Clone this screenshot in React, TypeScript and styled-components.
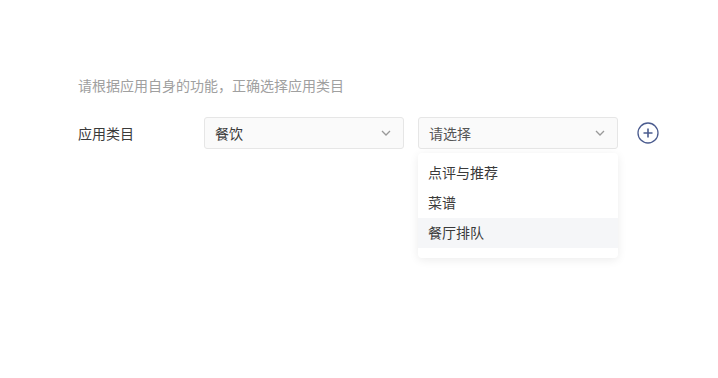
import React from "react";
import styled, { createGlobalStyle } from "styled-components";

const GlobalStyle = createGlobalStyle`
  body {
    margin: 0;
    background: #ffffff;
    font-family: "Noto Sans CJK SC", "Noto Sans", sans-serif;
  }
`;

const Page = styled.div`
  padding: 75px 0 0 78px;
  width: 718px;
  height: 378px;
  box-sizing: border-box;
`;

const Hint = styled.div`
  font-size: 14px;
  line-height: 20px;
  color: #a0a0a0;
  margin-bottom: 22px;
`;

const Row = styled.div`
  display: flex;
  align-items: center;
`;

const Label = styled.div`
  width: 126px;
  font-size: 14px;
  color: #3a3a3a;
`;

const SelectWrap = styled.div`
  position: relative;
  margin-right: 14px;
`;

const SelectBox = styled.div<{ $placeholder?: boolean }>`
  width: 200px;
  height: 32px;
  box-sizing: border-box;
  display: flex;
  align-items: center;
  justify-content: space-between;
  padding: 0 12px 0 10px;
  border: 1px solid #e6e6e6;
  border-radius: 3px;
  background: #fafafa;
  font-size: 14px;
  color: ${(p) => (p.$placeholder ? "#555555" : "#3a3a3a")};
`;

const Menu = styled.div`
  position: absolute;
  top: 36px;
  left: 0;
  width: 200px;
  padding: 5px 0 10px;
  background: #ffffff;
  border-radius: 4px;
  box-shadow: 0 2px 10px rgba(0, 0, 0, 0.08);
`;

const Option = styled.div<{ $active?: boolean }>`
  height: 30px;
  line-height: 28px;
  padding: 0 10px 2px;
  box-sizing: border-box;
  font-size: 14px;
  color: #3a3a3a;
  background: ${(p) => (p.$active ? "#f5f6f8" : "transparent")};
`;

const AddButton = styled.button`
  margin-left: 5px;
  padding: 0;
  border: none;
  background: none;
  display: flex;
  cursor: pointer;
`;

const Chevron = () => (
  <svg width="10" height="6" viewBox="0 0 10 6">
    <path d="M1 1l4 4 4-4" fill="none" stroke="#999" strokeWidth="1.3" />
  </svg>
);

const Select = ({ value, placeholder, options, active }: {
  value?: string;
  placeholder?: string;
  options?: string[];
  active?: number;
}) => (
  <SelectWrap>
    <SelectBox $placeholder={!value}>
      <span>{value || placeholder}</span>
      <Chevron />
    </SelectBox>
    {options && (
      <Menu>
        {options.map((o, i) => (
          <Option key={o} $active={i === active}>{o}</Option>
        ))}
      </Menu>
    )}
  </SelectWrap>
);

export default function App() {
  return (
    <Page>
      <GlobalStyle />
      <Hint>请根据应用自身的功能，正确选择应用类目</Hint>
      <Row>
        <Label>应用类目</Label>
        <Select value="餐饮" />
        <Select placeholder="请选择" options={["点评与推荐", "菜谱", "餐厅排队"]} active={2} />
        <AddButton>
          <svg width="22" height="22" viewBox="0 0 22 22">
            <circle cx="11" cy="11" r="10" fill="none" stroke="#4b5c8f" strokeWidth="1.3" />
            <path d="M11 6.5v9M6.5 11h9" stroke="#4b5c8f" strokeWidth="1.6" />
          </svg>
        </AddButton>
      </Row>
    </Page>
  );
}
